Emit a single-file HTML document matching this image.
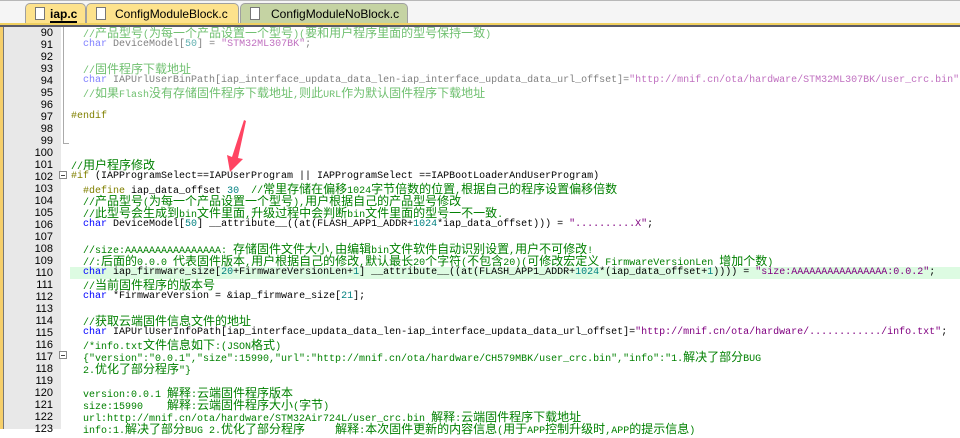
<!DOCTYPE html>
<html><head><meta charset="utf-8"><style>
*{margin:0;padding:0;box-sizing:border-box}
body{width:960px;height:429px;overflow:hidden;background:#fff;position:relative;font-family:"Liberation Mono","Noto Sans CJK SC",monospace}
#tabbar{position:absolute;left:0;top:0;width:960px;height:24px;background:#f5f5f5;border-top:1px solid #b8b8b8}
.tab{position:absolute;top:3px;height:22px;border:1px solid #a0a0a0;border-bottom:none;border-radius:5px 5px 0 0;font:12px "Liberation Sans","DejaVu Sans",sans-serif;color:#000;padding-left:28px;line-height:20px;white-space:nowrap;overflow:hidden}
.tab .ic{position:absolute;left:9px;top:3px;width:10px;height:13px;background:#fff;border:1px solid #777;}
#sep{position:absolute;left:0;top:23px;width:960px;height:2px;background:#f0d060}
#sep2{position:absolute;left:0;top:25px;width:960px;height:2px;background:#5a5a66}
#leftstrip{position:absolute;left:0;top:27px;width:3px;height:402px;background:#f6cf6a}
#gutter{position:absolute;left:3px;top:27px;width:58px;height:402px;background:#e8e8e8;border-left:1px solid #777}
#fold{position:absolute;left:61px;top:27px;width:2px;height:402px;background:#fff}
.ln{position:absolute;left:4px;width:49px;text-align:right;font-size:11px;line-height:12px;color:#000;font-family:"Liberation Sans",sans-serif}
.l{position:absolute;left:71px;white-space:pre;font-size:10px;line-height:12px;height:12px;color:#000}
.z{font-size:12px;font-family:"Liberation Sans","Noto Sans CJK SC",sans-serif}
.c{color:#008000}.k{color:#0000ff}.n{color:#008080}.s{color:#800080}.p{color:#808000}
.fc{color:#70c070}.fk{color:#8080ff}.fn{color:#60b0b0}.fs{color:#c070c0}.ft{color:#808080}
#hl{position:absolute;left:70px;top:267px;width:890px;height:12px;background:#ddfbe2}
.box{position:absolute;left:59px;width:8px;height:8px;border:1px solid #888;background:#fff}
.box:after{content:"";position:absolute;left:1px;top:3px;width:4px;height:1px;background:#444}
</style></head><body>
<div id="tabbar"></div>
<div class="tab" style="left:25px;width:61px;background:#fde28c;font-weight:bold;padding-left:24px"><span class="ic"></span><span style="border-bottom:2px solid #000">iap.c</span></div>
<div class="tab" style="left:86px;width:153px;background:#fde28c"><span class="ic"></span>ConfigModuleBlock.c</div>
<div class="tab" style="left:240px;width:168px;background:#c5d3a3;padding-left:30px"><span class="ic"></span>ConfigModuleNoBlock.c</div>
<div id="sep"></div><div id="sep2"></div>
<div id="leftstrip"></div><div id="gutter"></div><div id="fold"></div>
<div id="hl"></div>
<div style="position:absolute;left:63px;top:143px;width:6px;height:1px;background:#aaa"></div>
<div style="position:absolute;left:63px;top:27px;width:1px;height:117px;background:#aaa"></div>
<div class="box" style="top:171px"></div>
<div class="box" style="top:351px"></div>

<div class="ln" style="top:27px">90</div><div class="ln" style="top:39px">91</div><div class="ln" style="top:51px">92</div><div class="ln" style="top:63px">93</div><div class="ln" style="top:75px">94</div><div class="ln" style="top:87px">95</div><div class="ln" style="top:99px">96</div><div class="ln" style="top:111px">97</div><div class="ln" style="top:123px">98</div><div class="ln" style="top:135px">99</div><div class="ln" style="top:147px">100</div><div class="ln" style="top:159px">101</div><div class="ln" style="top:171px">102</div><div class="ln" style="top:183px">103</div><div class="ln" style="top:195px">104</div><div class="ln" style="top:207px">105</div><div class="ln" style="top:219px">106</div><div class="ln" style="top:231px">107</div><div class="ln" style="top:243px">108</div><div class="ln" style="top:255px">109</div><div class="ln" style="top:267px">110</div><div class="ln" style="top:279px">111</div><div class="ln" style="top:291px">112</div><div class="ln" style="top:303px">113</div><div class="ln" style="top:315px">114</div><div class="ln" style="top:327px">115</div><div class="ln" style="top:339px">116</div><div class="ln" style="top:351px">117</div><div class="ln" style="top:363px">118</div><div class="ln" style="top:375px">119</div><div class="ln" style="top:387px">120</div><div class="ln" style="top:399px">121</div><div class="ln" style="top:411px">122</div><div class="ln" style="top:423px">123</div>

<div class="l fc" style="top:27px">  //<span class="z">产品型号</span>(<span class="z">为每一个产品设置一个型号</span>)(<span class="z">要和用户程序里面的型号保持一致</span>)</div>
<div class="l ft" style="top:39px">  <span class="fk">char</span> DeviceModel[<span class="fn">50</span>] = <span class="fs">"STM32ML307BK"</span>;</div>
<div class="l fc" style="top:63px">  //<span class="z">固件程序下载地址</span></div>
<div class="l ft" style="top:75px">  <span class="fk">char</span> IAPUrlUserBinPath[iap_interface_updata_data_len-iap_interface_updata_data_url_offset]=<span class="fs">"http://mnif.cn/ota/hardware/STM32ML307BK/user_crc.bin"</span></div>
<div class="l fc" style="top:87px">  //<span class="z">如果</span>Flash<span class="z">没有存储固件程序下载地址</span>,<span class="z">则此</span>URL<span class="z">作为默认固件程序下载地址</span></div>
<div class="l p" style="top:111px">#endif</div>
<div class="l c" style="top:159px">//<span class="z">用户程序修改</span></div>
<div class="l" style="top:171px"><span class="p">#if</span> (IAPProgramSelect==IAPUserProgram || IAPProgramSelect ==IAPBootLoaderAndUserProgram)</div>
<div class="l" style="top:183px">  <span class="p">#define</span> iap_data_offset <span class="n">30</span>  <span class="c">//<span class="z">常里存储在偏移</span>1024<span class="z">字节倍数的位置</span>,<span class="z">根据自己的程序设置偏移倍数</span></span></div>
<div class="l c" style="top:195px">  //<span class="z">产品型号</span>(<span class="z">为每一个产品设置一个型号</span>),<span class="z">用户根据自己的产品型号修改</span></div>
<div class="l c" style="top:207px">  //<span class="z">此型号会生成到</span>bin<span class="z">文件里面</span>,<span class="z">升级过程中会判断</span>bin<span class="z">文件里面的型号一不一致</span>.</div>
<div class="l" style="top:219px">  <span class="k">char</span> DeviceModel[<span class="n">50</span>] __attribute__((at(FLASH_APP1_ADDR+<span class="n">1024</span>*iap_data_offset))) = <span class="s">"..........X"</span>;</div>
<div class="l c" style="top:243px">  //size:AAAAAAAAAAAAAAAA: <span class="z">存储固件文件大小</span>,<span class="z">由编辑</span>bin<span class="z">文件软件自动识别设置</span>,<span class="z">用户不可修改</span>!</div>
<div class="l c" style="top:255px">  //:<span class="z">后面的</span>0.0.0 <span class="z">代表固件版本</span>,<span class="z">用户根据自己的修改</span>,<span class="z">默认最长</span>20<span class="z">个字符</span>(<span class="z">不包含</span>20)(<span class="z">可修改宏定义</span> FirmwareVersionLen <span class="z">增加个数</span>)</div>
<div class="l" style="top:267px">  <span class="k">char</span> iap_firmware_size[<span class="n">20</span>+FirmwareVersionLen+<span class="n">1</span>] __attribute__((at(FLASH_APP1_ADDR+<span class="n">1024</span>*(iap_data_offset+<span class="n">1</span>)))) = <span class="s">"size:AAAAAAAAAAAAAAAA:0.0.2"</span>;</div>
<div class="l c" style="top:279px">  //<span class="z">当前固件程序的版本号</span></div>
<div class="l" style="top:291px">  <span class="k">char</span> *FirmwareVersion = &amp;iap_firmware_size[<span class="n">21</span>];</div>
<div class="l c" style="top:315px">  //<span class="z">获取云端固件信息文件的地址</span></div>
<div class="l" style="top:327px">  <span class="k">char</span> IAPUrlUserInfoPath[iap_interface_updata_data_len-iap_interface_updata_data_url_offset]=<span class="s">"http://mnif.cn/ota/hardware/............/info.txt"</span>;</div>
<div class="l c" style="top:339px">  /*info.txt<span class="z">文件信息如下</span>:(JSON<span class="z">格式</span>)</div>
<div class="l c" style="top:351px">  {"version":"0.0.1","size":15990,"url":"http://mnif.cn/ota/hardware/CH579MBK/user_crc.bin","info":"1.<span class="z">解决了部分</span>BUG</div>
<div class="l c" style="top:363px">  2.<span class="z">优化了部分程序</span>"}</div>
<div class="l c" style="top:387px">  version:0.0.1 <span class="z">解释</span>:<span class="z">云端固件程序版本</span></div>
<div class="l c" style="top:399px">  size:15990    <span class="z">解释</span>:<span class="z">云端固件程序大小</span>(<span class="z">字节</span>)</div>
<div class="l c" style="top:411px">  url:http://mnif.cn/ota/hardware/STM32Air724L/user_crc.bin <span class="z">解释</span>:<span class="z">云端固件程序下载地址</span></div>
<div class="l c" style="top:423px">  info:1.<span class="z">解决了部分</span>BUG 2.<span class="z">优化了部分程序</span>     <span class="z">解释</span>:<span class="z">本次固件更新的内容信息</span>(<span class="z">用于</span>APP<span class="z">控制升级时</span>,APP<span class="z">的提示信息</span>)</div>

<svg style="position:absolute;left:0;top:0" width="960" height="429">
<path d="M246 121 L238 158 L243 159 L230 172 L227 155 L232 157 L244 120 Z" fill="#ff4462"/>
</svg>
</body></html>
